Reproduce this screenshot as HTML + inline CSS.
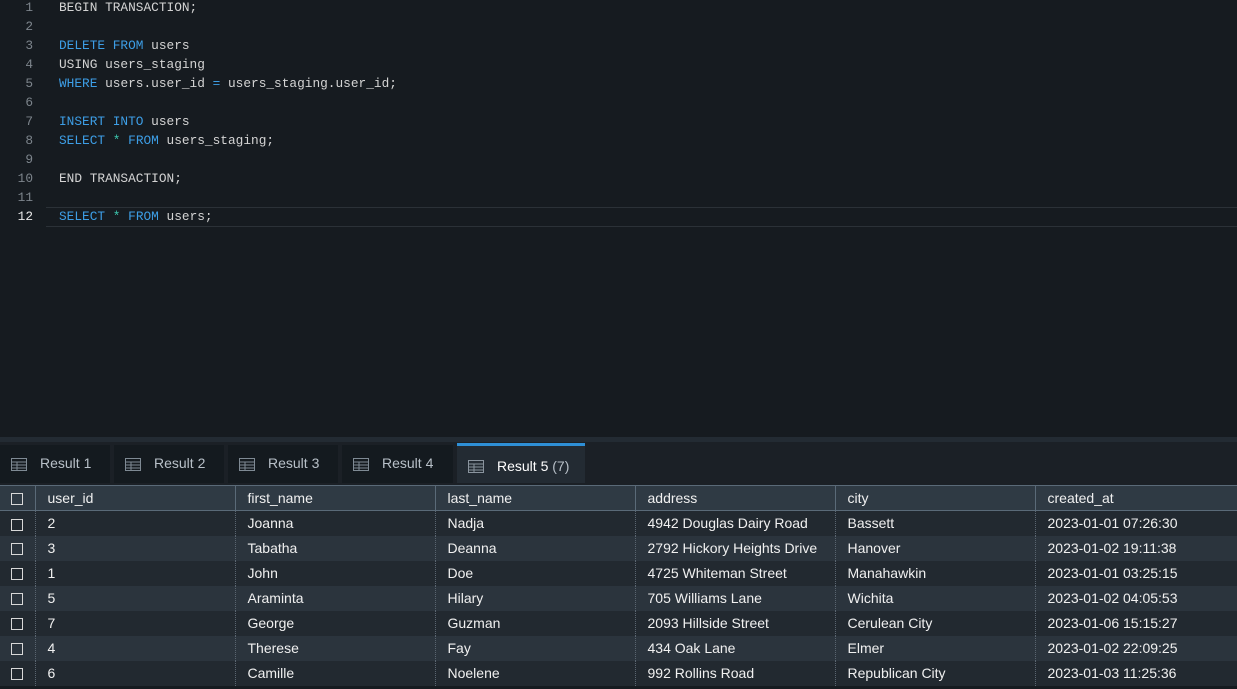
<!DOCTYPE html><html><head><style>
body{margin:0;width:1237px;height:689px;overflow:hidden;background:#161b20;font-family:"Liberation Sans",sans-serif}
.ed{position:absolute;left:0;top:0;width:1237px;height:436px;background:#161b20;font-family:"Liberation Mono",monospace;font-size:12.8px;color:#d4d4d4}
.ln{position:absolute;left:0;width:33px;text-align:right;color:#7d858c;height:19px;line-height:19px}
.cd{position:absolute;left:59px;height:19px;line-height:19px;white-space:pre}
.k{color:#3d9ee6}.s{color:#3dc9b0}
.cur{position:absolute;left:46px;top:207px;width:1191px;height:18px;border-top:1px solid #2b3137;border-bottom:1px solid #2b3137}
.split{position:absolute;left:0;top:437px;width:1237px;height:5px;background:#232b33}
.tabs{position:absolute;left:0;top:442px;width:1237px;height:43px;background:#1b2026}
.tab{position:absolute;top:3px;height:38px;width:110px;background:#141a1f;color:#b8c0c8;font-size:14px;line-height:36px}
.tab svg{position:absolute;left:11px;top:13px}
.tab span{position:absolute;left:40px}
.act{background:#232b33;border-top:3px solid #2e8fd6;top:1px;height:37px;color:#fff;line-height:40px}
table{position:absolute;left:0;top:485px;border-collapse:collapse;font-size:14px;color:#f0f0f0;table-layout:fixed}
tr{height:25px}
td,th{height:25px;box-sizing:border-box;padding:0 0 0 12px;text-align:left;font-weight:normal;white-space:nowrap}
th{background:#2f3a44;border:1px solid #5a6a78}
td{border-left:1px dotted #5a6570}
tr.o td{background:#222930}tr.e td{background:#2b343d}
td:first-child,th:first-child{padding:0;border-left:none;text-align:center}
.cb{display:inline-block;width:10px;height:10px;border:1px solid #d8d8d8;vertical-align:middle}
</style></head><body>
<div class="ed">
<div class="cur"></div>
<div class="ln" style="top:-2px">1</div><div class="cd" style="top:-2px">BEGIN TRANSACTION;</div>
<div class="ln" style="top:17px">2</div>
<div class="ln" style="top:36px">3</div><div class="cd" style="top:36px"><span class="k">DELETE FROM</span> users</div>
<div class="ln" style="top:55px">4</div><div class="cd" style="top:55px">USING users_staging</div>
<div class="ln" style="top:74px">5</div><div class="cd" style="top:74px"><span class="k">WHERE</span> users.user_id <span class="k">=</span> users_staging.user_id;</div>
<div class="ln" style="top:93px">6</div>
<div class="ln" style="top:112px">7</div><div class="cd" style="top:112px"><span class="k">INSERT INTO</span> users</div>
<div class="ln" style="top:131px">8</div><div class="cd" style="top:131px"><span class="k">SELECT</span> <span class="s">*</span> <span class="k">FROM</span> users_staging;</div>
<div class="ln" style="top:150px">9</div>
<div class="ln" style="top:169px">10</div><div class="cd" style="top:169px">END TRANSACTION;</div>
<div class="ln" style="top:188px">11</div>
<div class="ln" style="top:207px;color:#e8e8e8">12</div><div class="cd" style="top:207px"><span class="k">SELECT</span> <span class="s">*</span> <span class="k">FROM</span> users;</div>
</div>
<div class="split"></div>
<div class="tabs">
<div class="tab" style="left:0"><svg width="17" height="13"><rect x="0.5" y="0.5" width="15" height="12" fill="none" stroke="#7f8a94"/><path d="M1 4h14M1 7h14M1 10h14M6 4v9" stroke="#7f8a94"/></svg><span>Result 1</span></div>
<div class="tab" style="left:114px"><svg width="17" height="13"><rect x="0.5" y="0.5" width="15" height="12" fill="none" stroke="#7f8a94"/><path d="M1 4h14M1 7h14M1 10h14M6 4v9" stroke="#7f8a94"/></svg><span>Result 2</span></div>
<div class="tab" style="left:228px"><svg width="17" height="13"><rect x="0.5" y="0.5" width="15" height="12" fill="none" stroke="#7f8a94"/><path d="M1 4h14M1 7h14M1 10h14M6 4v9" stroke="#7f8a94"/></svg><span>Result 3</span></div>
<div class="tab" style="left:342px;width:111px"><svg width="17" height="13"><rect x="0.5" y="0.5" width="15" height="12" fill="none" stroke="#7f8a94"/><path d="M1 4h14M1 7h14M1 10h14M6 4v9" stroke="#7f8a94"/></svg><span>Result 4</span></div>
<div class="tab act" style="left:457px;width:128px"><svg width="17" height="13" style="top:14px"><rect x="0.5" y="0.5" width="15" height="12" fill="none" stroke="#8a949e"/><path d="M1 4h14M1 7h14M1 10h14M6 4v9" stroke="#8a949e"/></svg><span>Result 5 <span style="position:static;color:#b8c0c8">(7)</span></span></div>
</div>
<table style="width:1237px">
<colgroup><col style="width:35px"><col style="width:200px"><col style="width:200px"><col style="width:200px"><col style="width:200px"><col style="width:200px"><col style="width:202px"></colgroup>
<tr><th><span class="cb"></span></th><th>user_id</th><th>first_name</th><th>last_name</th><th>address</th><th>city</th><th>created_at</th></tr>
<tr class="o"><td><span class="cb"></span></td><td>2</td><td>Joanna</td><td>Nadja</td><td>4942 Douglas Dairy Road</td><td>Bassett</td><td>2023-01-01 07:26:30</td></tr>
<tr class="e"><td><span class="cb"></span></td><td>3</td><td>Tabatha</td><td>Deanna</td><td>2792 Hickory Heights Drive</td><td>Hanover</td><td>2023-01-02 19:11:38</td></tr>
<tr class="o"><td><span class="cb"></span></td><td>1</td><td>John</td><td>Doe</td><td>4725 Whiteman Street</td><td>Manahawkin</td><td>2023-01-01 03:25:15</td></tr>
<tr class="e"><td><span class="cb"></span></td><td>5</td><td>Araminta</td><td>Hilary</td><td>705 Williams Lane</td><td>Wichita</td><td>2023-01-02 04:05:53</td></tr>
<tr class="o"><td><span class="cb"></span></td><td>7</td><td>George</td><td>Guzman</td><td>2093 Hillside Street</td><td>Cerulean City</td><td>2023-01-06 15:15:27</td></tr>
<tr class="e"><td><span class="cb"></span></td><td>4</td><td>Therese</td><td>Fay</td><td>434 Oak Lane</td><td>Elmer</td><td>2023-01-02 22:09:25</td></tr>
<tr class="o"><td><span class="cb"></span></td><td>6</td><td>Camille</td><td>Noelene</td><td>992 Rollins Road</td><td>Republican City</td><td>2023-01-03 11:25:36</td></tr>
</table>
</body></html>
